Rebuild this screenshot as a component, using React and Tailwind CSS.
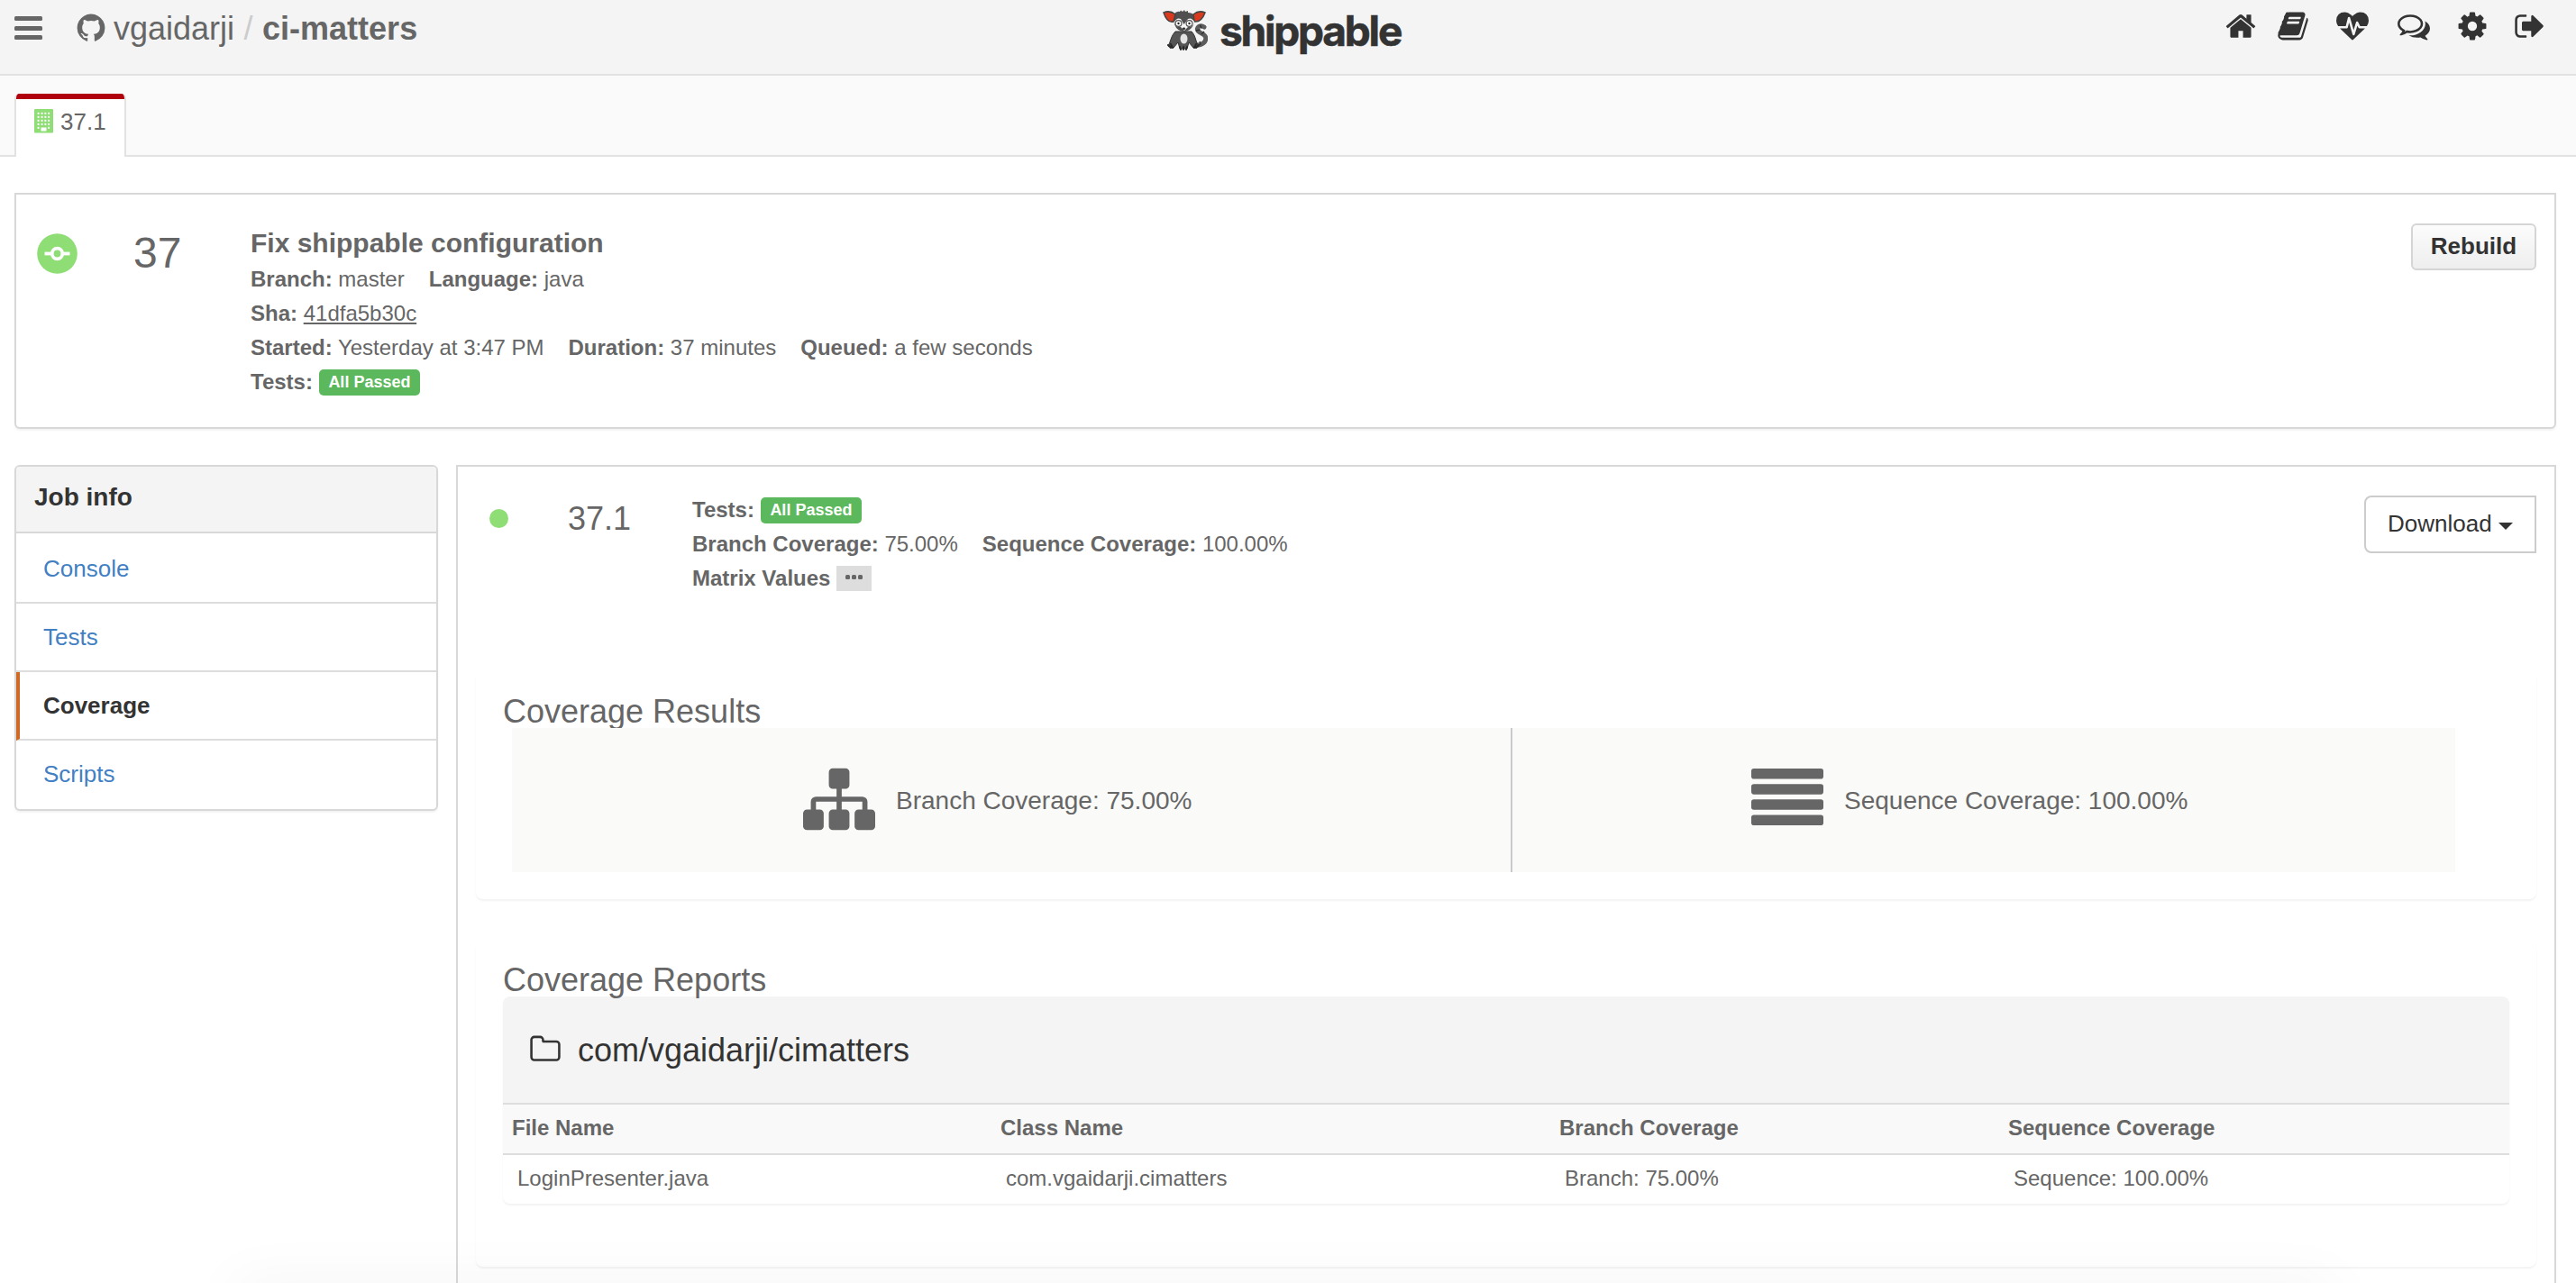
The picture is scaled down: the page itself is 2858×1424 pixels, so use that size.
import React from "react";

const ICONS = {
  github:
    "M896 128q209 0 385.500 103t279.500 279.500 103 385.500q0 251-146.500 451.500t-378.500 277.500q-27 5-40-7t-13-30q0-3 .5-76.500t.5-134.500q0-97-52-142 57-6 102.500-18t94-39 81-66.500 53-105 20.500-150.500q0-119-79-206 37-91-8-204-28-9-81 11t-92 44l-38 24q-93-26-192-26t-192 26q-16-11-42.500-27t-83.500-38.500-85-13.500q-45 113-8 204-79 87-79 206 0 85 20.500 150t52.500 105 80.500 67 94 39 102.500 18q-39 36-49 103-21 10-45 15t-57 5-65.500-21.500-55.500-62.500q-19-32-48.500-52t-49.500-24l-20-3q-21 0-29 4.500t-5 11.500 9 14 13 12l7 5q22 10 43.500 38t31.500 51l10 23q13 38 44 61.500t67 30 69.500 7 55.500-3.500l23-4q0 38 .5 88.500t.5 54.500q0 18-13 30t-40 7q-232-77-378.500-277.500t-146.500-451.500q0-209 103-385.500t279.500-279.500 385.500-103z",
  home: "M1472 992v480q0 26-19 45t-45 19h-384v-384h-256v384h-384q-26 0-45-19t-19-45v-480q0-1 .5-3t.5-3l575-474 575 474q1 2 1 6zm223-69l-62 74q-8 9-21 11h-3q-13 0-21-7l-692-577-692 577q-12 8-24 7-13-2-21-11l-62-74q-8-10-7-23.500t11-21.500l719-599q32-26 76-26t76 26l244 204v-195q0-14 9-23t23-9h192q14 0 23 9t9 23v408l219 182q10 8 11 21.500t-7 23.500z",
  book: "M1703 478q40 57 18 129l-275 906q-19 64-76.500 107.500t-122.500 43.500h-923q-77 0-148.500-53.500t-99.500-131.500q-24-67-2-127 0-4 3-27t4-37q1-8-3-21.500t-3-19.500q2-11 8-21t16.500-23.500 16.500-23.500q23-38 45-91.500t30-91.500q3-10 .5-30t-.5-28q3-11 17-28t17-23q21-36 42-92t25-90q1-9-2.500-32t.5-28q4-13 22-30.500t22-22.500q19-26 42.500-84.500t27.500-96.500q1-8-3-25.500t-2-26.500q2-8 9-18t18-23 17-21q8-12 16.500-30.500t15-35 16-36 19.500-32 26.500-23.500 36-11.500 47.500 5.500l-1 3q38-9 51-9h761q74 0 114 56t18 130l-274 906q-36 119-71.500 153.500t-128.500 34.500h-869q-27 0-38 15-11 16-1 43 24 70 144 70h923q29 0 56-15.500t35-41.500l300-987q7-22 5-57 38 15 59 43zm-1064 2q-4 13 2 22.500t20 9.500h608q13 0 25.500-9.500t16.500-22.500l21-64q4-13-2-22.500t-20-9.500h-608q-13 0-25.500 9.500t-16.500 22.500zm-83 256q-4 13 2 22.500t20 9.500h608q13 0 25.500-9.500t16.500-22.500l21-64q4-13-2-22.500t-20-9.500h-608q-13 0-25.500 9.500t-16.500 22.500z",
  heartbeat:
    "M1280 1024h305q-5 6-10 10.500t-9 7.500l-3 4-623 600q-18 18-44 18t-44-18l-624-602q-5-2-21-20h369q22 0 39.500-13.500t22.500-34.500l70-281 190 667q6 20 23 33t39 13q21 0 38-13t23-33l146-485 56 112q18 35 57 35zm512-428q0 145-103 300h-369l-111-221q-8-17-25.500-27t-36.500-8q-45 5-56 46l-129 430-196-686q-6-20-23.500-33t-39.500-13-39 13.500-22 34.500l-116 464h-423q-103-155-103-300 0-220 127-344t351-124q62 0 126.500 21.500t120 58 95.500 68.500 76 68q36-36 76-68t95.500-68.500 120-58 126.500-21.500q224 0 351 124t127 344z",
  comments:
    "M704 384q-153 0-286 52t-211.500 141-78.500 191q0 82 53 158t149 132l97 56-35 84q34-20 62-39l44-31 53 10q78 14 153 14 153 0 286-52t211.500-141 78.500-191-78.500-191-211.500-141-286-52zm0-128q191 0 353.500 68.500t256.500 186.500 94 257-94 257-256.500 186.500-353.500 68.500q-86 0-176-16-124 88-278 128-36 9-86 16h-3q-11 0-20.500-8t-11.500-21q-1-3-1-6.500t.5-6.500 2-6l2.500-5 3.500-5.500 4-5 4.500-5 4-4.500q5-6 23-25t26-29.500 22.500-29 25-38.500 20.500-44q-124-72-195-177t-71-224q0-139 94-257t256.500-186.500 353.500-68.500zm822 1169q10 24 20.500 44t25 38.500 22.500 29 26 29.500 23 25q1 1 4 4.500t4.500 5 4 5 3.500 5.500l2.500 5 2 6 .5 6.500-1 6.500q-3 14-13 22t-22 7q-50-7-86-16-154-40-278-128-90 16-176 16-271 0-472-132 58 4 88 4 161 0 309-45t264-129q125-92 192-212t67-254q0-77-23-152 129 71 204 178t75 230q0 120-71 224.500t-195 176.500z",
  cog: "M1152 896q0-106-75-181t-181-75-181 75-75 181 75 181 181 75 181-75 75-181zm512-109v222q0 12-8 23t-20 13l-185 28q-19 54-39 91 35 50 107 138 10 12 10 25t-9 23q-27 37-99 108t-94 71q-12 0-26-9l-138-108q-44 23-91 38-16 136-29 186-7 28-36 28h-222q-14 0-24.500-8.500t-11.500-21.500l-28-184q-49-16-90-37l-141 107q-10 9-25 9-14 0-25-11-126-114-165-168-7-10-7-23 0-12 8-23 15-21 51-66.500t54-70.500q-27-50-41-99l-183-27q-13-2-21-12.500t-8-23.500v-222q0-12 8-23t19-13l186-28q14-46 39-92-40-57-107-138-10-12-10-24 0-10 9-23 26-36 98.500-107.500t94.500-71.500q13 0 26 10l138 107q44-23 91-38 16-136 29-186 7-28 36-28h222q14 0 24.500 8.500t11.500 21.500l28 184q49 16 90 37l142-107q9-9 24-9 13 0 25 10 129 119 165 170 7 8 7 22 0 12-8 23-15 21-51 66.500t-54 70.500q26 50 41 98l183 28q13 2 21 12.500t8 23.500z",
  signOut:
    "M704 1440q0 4 1 20t.5 26.500-3 23.500-10 19.500-20.500 6.500h-320q-119 0-203.500-84.500t-84.500-203.500v-704q0-119 84.500-203.500t203.500-84.500h320q13 0 22.500 9.500t9.500 22.500q0 4 1 20t.5 26.500-3 23.500-10 19.500-20.500 6.500h-320q-66 0-113 47t-47 113v704q0 66 47 113t113 47h312l11.500 1 11.500 3 8 5.500 7 9 2 13.500zm928-544q0 26-19 45l-544 544q-19 19-45 19t-45-19-19-45v-288h-448q-26 0-45-19t-19-45v-384q0-26 19-45t45-19h448v-288q0-26 19-45t45-19 45 19l544 544q19 19 19 45z",
  folder:
    "M1600 1312v-704q0-40-28-68t-68-28h-704q-40 0-68-28t-28-68v-64q0-40-28-68t-68-28h-320q-40 0-68 28t-28 68v960q0 40 28 68t68 28h1216q40 0 68-28t28-68zm128-704v704q0 92-66 158t-158 66h-1216q-92 0-158-66t-66-158v-960q0-92 66-158t158-66h320q92 0 158 66t66 158v32h672q92 0 158 66t66 158z",
  sitemap:
    "M1792 1248v320q0 40-28 68t-68 28h-320q-40 0-68-28t-28-68v-320q0-40 28-68t68-28h96v-192h-512v192h96q40 0 68 28t28 68v320q0 40-28 68t-68 28h-320q-40 0-68-28t-28-68v-320q0-40 28-68t68-28h96v-192h-512v192h96q40 0 68 28t28 68v320q0 40-28 68t-68 28h-320q-40 0-68-28t-28-68v-320q0-40 28-68t68-28h96v-192q0-52 38-90t90-38h512v-192h-96q-40 0-68-28t-28-68v-320q0-40 28-68t68-28h320q40 0 68 28t28 68v320q0 40-28 68t-68 28h-96v192h512q52 0 90 38t38 90v192h96q40 0 68 28t28 68z",
};

function Icon({ name, className }) {
  return (
    <svg viewBox="0 0 1792 1792" fill="currentColor" className={`shrink-0 ${className}`}>
      <path d={ICONS[name]} />
    </svg>
  );
}

function Lemur() {
  return (
    <svg viewBox="0 0 50 46" className="h-[46px] w-[50px] shrink-0">
      <path d="M35 40C44 41 49 36 47.500 31C46 26 37 27 38.500 21.500C39.500 18.500 43 18 46 20" fill="none" stroke="#5c5c5c" strokeWidth="5" strokeLinecap="round" />
      <path d="M41.500 17.500l1.500 4M37 24l4.500-1M43 28l3-3M42 40l-1-4" stroke="#2f2f2f" strokeWidth="1.300" />
      <path d="M14 25C9 30 9 36 6 41L12 43L17 37L19 44H27L29 37L34 43L40 41C36 36 37 30 32 25Z" fill="#555" stroke="#333" strokeWidth="1" />
      <path d="M6 40l3 3M9 39l2 4M40 40l-3 3M37 39l-2 4M19 42l1 3M23 42v3M27 42l-1 3" stroke="#292929" strokeWidth="2" strokeLinecap="round" />
      <ellipse cx="23.500" cy="33" rx="4" ry="5.500" fill="#e4e4e4" />
      <path d="M12 6Q16 1.500 19 3L20 1.500L22 3L24 1L25 3L28 2L28 4Q33 4 36 8L34 18Q30 25 24 25Q16 25 13 17Z" fill="#505050" />
      <path d="M1 4Q8 1 14 6L12 14Q5 16 1 4Z" fill="#d9391c" stroke="#444" strokeWidth="1.500" />
      <path d="M47 4Q40 1 34 6L35 14Q43 15 47 4Z" fill="#d9391c" stroke="#444" strokeWidth="1.500" />
      <path d="M13 14Q16 9 20 11L23.500 17L28 11Q32 9 35 14Q35 20 28 20L24 24L20 20Q13 20 13 14Z" fill="#f5f5f5" />
      <circle cx="17.500" cy="16" r="3.400" fill="#fff" stroke="#555" strokeWidth="1.200" />
      <circle cx="29.500" cy="16" r="3.400" fill="#fff" stroke="#555" strokeWidth="1.200" />
      <circle cx="17.500" cy="16" r="1.200" fill="#222" />
      <circle cx="29.500" cy="16" r="1.200" fill="#222" />
      <ellipse cx="23.500" cy="21.800" rx="1.700" ry="1.300" fill="#333" />
    </svg>
  );
}

function Building() {
  const rows = [4, 8, 12, 16, 20];
  const cols = [4, 8, 11.8, 15.6];
  return (
    <svg viewBox="0 0 21 27" className="h-[27px] w-[21px] shrink-0">
      <rect width="21" height="26.500" rx="1" fill="#8edd75" />
      {rows.map((y) =>
        cols.map((x) =>
          y === 20 && (x === 8 || x === 11.8) ? null : (
            <rect key={`${x}-${y}`} x={x - 0.4} y={y - 0.2} width="1.900" height="2.100" fill="#fff" />
          )
        )
      )}
      <rect x="7.500" y="20.500" width="6" height="4" fill="#fff" />
    </svg>
  );
}

function Passed() {
  return (
    <span className="ml-[7px] inline-flex h-[29px] w-[112px] items-center justify-center rounded-[5px] bg-[#5cb85c] text-[18px] leading-[24px] font-bold text-white">
      All Passed
    </span>
  );
}

function Field({ label, children }) {
  return (
    <span className="mr-[27px] whitespace-pre">
      <b>{label}</b> {children}
    </span>
  );
}

function Header() {
  return (
    <header className="flex h-[84px] items-start justify-between border-b-2 border-[#e2e2e2] bg-[#f4f4f4]">
      <div className="flex w-[1290px] items-start pl-[16px]">
        <div className="mt-[18px] flex flex-col gap-[5.500px]">
          <i className="block h-[5px] w-[31px] rounded-[1.500px] bg-[#666]" />
          <i className="block h-[5px] w-[31px] rounded-[1.500px] bg-[#666]" />
          <i className="block h-[5px] w-[31px] rounded-[1.500px] bg-[#666]" />
        </div>
        <Icon name="github" className="mt-[13px] ml-[36px] h-[36px] w-[36px]" />
        <div className="mt-[12px] ml-[7px] flex text-[36px] leading-[40px]">
          <span>vgaidarji</span>
          <span className="w-[31px] text-center text-[#ccc]">/</span>
          <b>ci-matters</b>
        </div>
      </div>
      <div className="flex items-start">
        <div className="mt-[10px]">
          <Lemur />
        </div>
        <span className="mt-[6px] ml-[13px] font-[Inter] text-[46px] leading-[56px] font-bold tracking-[-2.200px] text-[#333] [-webkit-text-stroke:0.6px_#333]">
          shippable
        </span>
      </div>
      <nav className="flex flex-1 items-start justify-end pt-[11px] pr-[33px] text-[#333]">
        <Icon name="home" className="h-[36px] w-[36px]" />
        <Icon name="book" className="ml-[22px] h-[36px] w-[36px]" />
        <Icon name="heartbeat" className="ml-[30px] h-[36px] w-[36px]" />
        <Icon name="comments" className="ml-[32px] h-[36px] w-[36px]" />
        <Icon name="cog" className="ml-[29px] h-[36px] w-[36px]" />
        <Icon name="signOut" className="ml-[28px] h-[36px] w-[36px]" />
      </nav>
    </header>
  );
}

function Tabs() {
  return (
    <div className="flex h-[90px] items-end border-b-2 border-[#e2e2e2] bg-[#fafafa] pl-[16px]">
      <div className="-mb-[2px] h-[70px] w-[124px] overflow-hidden rounded-t-[5px] border-x-2 border-[#e2e2e2] bg-white">
        <div className="h-[6px] bg-[#b0000e]" />
        <div className="flex items-start pt-[11px] pl-[20px]">
          <Building />
          <span className="-mt-[1px] ml-[8px] text-[26px] leading-[30px]">37.1</span>
        </div>
      </div>
    </div>
  );
}

function RunSummary() {
  return (
    <section className="flex h-[262px] items-start rounded-b-[6px] border-2 border-[#d8d8d8] bg-white shadow-[0_2px_2px_rgba(0,0,0,0.05)]">
      <svg viewBox="0 0 45 45" className="mt-[43px] ml-[23px] h-[45px] w-[45px] shrink-0">
        <circle cx="22.500" cy="22.500" r="22.300" fill="#8edd75" />
        <path d="M8.500 22.500H36.500" stroke="#fff" strokeWidth="3.800" />
        <circle cx="22.500" cy="22.500" r="5.800" fill="#8edd75" stroke="#fff" strokeWidth="3.800" />
      </svg>
      <div className="mt-[41px] ml-[62px] w-[130px] text-[48px] leading-[48px]">37</div>
      <div className="mt-[35px] flex-1 text-[24px] leading-[38px]">
        <div className="mb-[2px] text-[30px] leading-[38px] font-bold">Fix shippable configuration</div>
        <div>
          <Field label="Branch:">master</Field>
          <Field label="Language:">java</Field>
        </div>
        <div>
          <Field label="Sha:">
            <span className="underline decoration-2 underline-offset-[2px]">41dfa5b30c</span>
          </Field>
        </div>
        <div>
          <Field label="Started:">Yesterday at 3:47 PM</Field>
          <Field label="Duration:">37 minutes</Field>
          <Field label="Queued:">a few seconds</Field>
        </div>
        <div className="flex items-center">
          <b>Tests:</b>
          <Passed />
        </div>
      </div>
      <button className="mt-[32px] mr-[20px] h-[52px] w-[139px] rounded-[6px] border-2 border-[#d5d5d5] bg-linear-to-b from-[#fcfcfc] to-[#eee] pb-[2px] text-[26px] leading-[26px] font-bold text-[#333]">
        Rebuild
      </button>
    </section>
  );
}

const LINKS = ["Console", "Tests", "Coverage", "Scripts"];

function Sidebar() {
  return (
    <aside className="flex h-[384px] w-[470px] shrink-0 flex-col overflow-hidden rounded-[6px] border-2 border-[#d8d8d8] bg-white shadow-[0_2px_2px_rgba(0,0,0,0.05)]">
      <div className="h-[74px] border-b-2 border-[#d8d8d8] bg-[#f4f4f4] pt-[18px] pl-[20px] text-[28px] leading-[32px] font-bold text-[#333]">
        Job info
      </div>
      {LINKS.map((name, i) => (
        <div
          key={name}
          className={
            (i === 0 ? "h-[78px] pt-[24px] " : "h-[76px] pt-[22px] ") +
            (i < 3 ? "border-b-2 border-b-[#ddd] " : "") +
            (name === "Coverage"
              ? "border-l-4 border-l-[#cf6a26] pl-[26px] font-bold text-[#333]"
              : "pl-[30px] text-[#427fc3]") +
            " text-[26px] leading-[30px]"
          }
        >
          {name}
        </div>
      ))}
    </aside>
  );
}

function CoverageResults() {
  return (
    <section className="ml-[20px] h-[252px] w-[2286px] rounded-[8px] shadow-[0_2px_2px_rgba(0,0,0,0.05)]">
      <h2 className="h-[62px] pt-[24px] pl-[30px] text-[36px] leading-[40px]">Coverage Results</h2>
      <div className="relative ml-[40px] flex h-[160px] w-[2156px] items-start bg-[#fafaf8] text-[28px]">
        <div className="flex h-full w-[1110px] items-start border-r-2 border-[#c8cacb] pl-[323px]">
          <Icon name="sitemap" className="mt-[39px] h-[80px] w-[80px]" />
          <span className="mt-[65px] ml-[23px] leading-[32px]">Branch Coverage: 75.00%</span>
        </div>
        <div className="flex items-start pl-[265px]">
          <svg viewBox="0 0 80 63" className="mt-[45px] h-[63px] w-[80px] shrink-0" fill="#666">
            <rect y="0" width="80" height="11.500" rx="2.800" />
            <rect y="17.150" width="80" height="11.500" rx="2.800" />
            <rect y="34.300" width="80" height="11.500" rx="2.800" />
            <rect y="51.450" width="80" height="11.500" rx="2.800" />
          </svg>
          <span className="mt-[65px] ml-[23px] leading-[32px]">Sequence Coverage: 100.00%</span>
        </div>
      </div>
    </section>
  );
}

function CoverageReports() {
  return (
    <section className="mt-[46px] ml-[20px] h-[362px] w-[2286px] rounded-[8px] shadow-[0_2px_2px_rgba(0,0,0,0.05)]">
      <h2 className="relative z-10 h-[62px] pt-[24px] pl-[30px] text-[36px] leading-[40px]">Coverage Reports</h2>
      <div className="ml-[30px] w-[2226px] overflow-hidden rounded-[8px] shadow-[0_2px_2px_rgba(0,0,0,0.05)]">
        <div className="flex h-[118px] items-start bg-[#f4f4f4] pl-[29px] text-[#333]">
          <Icon name="folder" className="mt-[41px] h-[36px] w-[36px]" />
          <span className="mt-[40px] ml-[18px] text-[36px] leading-[40px]">com/vgaidarji/cimatters</span>
        </div>
        <div className="grid h-[58px] grid-cols-[542px_620px_498px_566px] border-y-2 border-[#ddd] bg-[#f9f9f9] text-[24px] leading-[51px] font-bold [&>*]:pl-[10px]">
          <span>File Name</span>
          <span>Class Name</span>
          <span>Branch Coverage</span>
          <span>Sequence Coverage</span>
        </div>
        <div className="grid h-[54px] grid-cols-[542px_620px_498px_566px] text-[24px] leading-[51px] [&>*]:pl-[16px]">
          <span>LoginPresenter.java</span>
          <span>com.vgaidarji.cimatters</span>
          <span>Branch: 75.00%</span>
          <span>Sequence: 100.00%</span>
        </div>
      </div>
    </section>
  );
}

function JobPanel() {
  return (
    <main className="ml-[20px] h-[920px] flex-1 border-2 border-[#d8d8d8] bg-white">
      <div className="flex h-[228px] items-start">
        <div className="mt-[47px] ml-[35px] h-[21px] w-[21px] rounded-full bg-[#8edd75]" />
        <div className="mt-[40px] ml-[66px] w-[138px] text-[36px] leading-[36px]">37.1</div>
        <div className="mt-[29px] flex-1 text-[24px] leading-[38px]">
          <div className="flex items-center">
            <b>Tests:</b>
            <Passed />
          </div>
          <div>
            <Field label="Branch Coverage:">75.00%</Field>
            <Field label="Sequence Coverage:">100.00%</Field>
          </div>
          <div className="flex items-start">
            <b>Matrix Values</b>
            <span className="mt-[5px] ml-[7px] flex h-[28px] w-[39px] items-start justify-center gap-[2px] bg-[#ddd] pt-[10px]">
              <i className="block h-[5px] w-[5px] rounded-[1.500px] bg-[#666]" />
              <i className="block h-[5px] w-[5px] rounded-[1.500px] bg-[#666]" />
              <i className="block h-[5px] w-[5px] rounded-[1.500px] bg-[#666]" />
            </span>
          </div>
        </div>
        <button className="mt-[32px] mr-[20px] flex h-[64px] w-[191px] items-start rounded-l-[8px] border-2 border-[#ccc] bg-white pt-[16px] pl-[24px] text-[26px] leading-[26px] text-[#333]">
          Download
          <i className="mt-[12px] ml-[7px] block border-x-8 border-t-8 border-x-transparent border-t-[#333]" />
        </button>
      </div>
      <CoverageResults />
      <CoverageReports />
    </main>
  );
}

export default function App() {
  return (
    <div className="relative h-[1424px] w-[2858px] overflow-hidden bg-white font-['Liberation_Sans',Arial,sans-serif] text-[#666]">
      <Header />
      <Tabs />
      <div className="mt-[40px] mr-[22px] ml-[16px]">
        <RunSummary />
        <div className="mt-[40px] flex items-start">
          <Sidebar />
          <JobPanel />
        </div>
      </div>
      <div className="pointer-events-none absolute -bottom-[40px] left-[260px] h-[40px] w-[2330px] shadow-[0_0_64px_rgba(0,0,0,0.05)]" />
    </div>
  );
}
